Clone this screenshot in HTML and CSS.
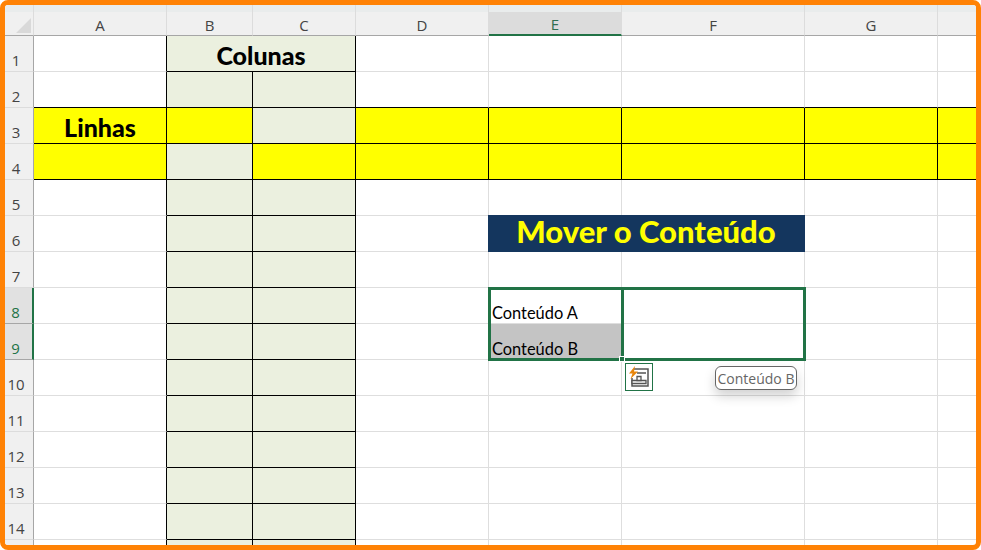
FILE: index.html
```html
<!DOCTYPE html>
<html lang="pt">
<head>
<meta charset="utf-8">
<title>Mover o Conteúdo</title>
<link rel="stylesheet" href="styles.css">
</head>
<body>
<div class="frame">
<div class="sheet">
  <div class="ch corner"><svg class="tri" width="15" height="15" viewBox="0 0 15 15"><path d="M15 0V15H0Z" fill="#d9d9d9"/></svg></div>
  <div class="ch">A</div><div class="ch">B</div><div class="ch">C</div><div class="ch">D</div><div class="ch active">E</div><div class="ch">F</div><div class="ch">G</div><div class="ch last"></div>

  <div class="rh">1</div><div class="c br"></div><div class="c g bk span2 big">Colunas</div><div class="c"></div><div class="c"></div><div class="c"></div><div class="c"></div><div class="c"></div>
  <div class="rh">2</div><div class="c br bbk"></div><div class="c g bk"></div><div class="c g bk"></div><div class="c bbk"></div><div class="c bbk"></div><div class="c bbk"></div><div class="c bbk"></div><div class="c bbk"></div>
  <div class="rh">3</div><div class="c y bk big">Linhas</div><div class="c y bk"></div><div class="c g bk"></div><div class="c y bk"></div><div class="c y bk"></div><div class="c y bk"></div><div class="c y bk"></div><div class="c y bk"></div>
  <div class="rh">4</div><div class="c y bk"></div><div class="c g bk"></div><div class="c y bk"></div><div class="c y bk"></div><div class="c y bk"></div><div class="c y bk"></div><div class="c y bk"></div><div class="c y bk"></div>
  <div class="rh">5</div><div class="c br"></div><div class="c g bk"></div><div class="c g bk"></div><div class="c"></div><div class="c"></div><div class="c"></div><div class="c"></div><div class="c"></div>
  <div class="rh">6</div><div class="c br"></div><div class="c g bk"></div><div class="c g bk"></div><div class="c"></div><div class="c title">Mover o Conteúdo</div><div class="c"></div><div class="c"></div>
  <div class="rh">7</div><div class="c br"></div><div class="c g bk"></div><div class="c g bk"></div><div class="c"></div><div class="c"></div><div class="c"></div><div class="c"></div><div class="c"></div>
  <div class="rh on">8</div><div class="c br"></div><div class="c g bk"></div><div class="c g bk"></div><div class="c"></div><div class="c txt">Conteúdo A</div><div class="c"></div><div class="c"></div><div class="c"></div>
  <div class="rh on">9</div><div class="c br"></div><div class="c g bk"></div><div class="c g bk"></div><div class="c"></div><div class="c txt grey">Conteúdo B</div><div class="c"></div><div class="c"></div><div class="c"></div>
  <div class="rh">10</div><div class="c br"></div><div class="c g bk"></div><div class="c g bk"></div><div class="c"></div><div class="c"></div><div class="c"></div><div class="c"></div><div class="c"></div>
  <div class="rh">11</div><div class="c br"></div><div class="c g bk"></div><div class="c g bk"></div><div class="c"></div><div class="c"></div><div class="c"></div><div class="c"></div><div class="c"></div>
  <div class="rh">12</div><div class="c br"></div><div class="c g bk"></div><div class="c g bk"></div><div class="c"></div><div class="c"></div><div class="c"></div><div class="c"></div><div class="c"></div>
  <div class="rh">13</div><div class="c br"></div><div class="c g bk"></div><div class="c g bk"></div><div class="c"></div><div class="c"></div><div class="c"></div><div class="c"></div><div class="c"></div>
  <div class="rh">14</div><div class="c br"></div><div class="c g bk"></div><div class="c g bk"></div><div class="c"></div><div class="c"></div><div class="c"></div><div class="c"></div><div class="c"></div>
  <div class="rh"></div><div class="c br"></div><div class="c g bk"></div><div class="c g bk"></div><div class="c"></div><div class="c"></div><div class="c"></div><div class="c"></div><div class="c"></div>

  <div class="selection"><div class="sel-line"></div><div class="handle"></div></div>
  <div class="anchor">
    <div class="qa"><svg width="24" height="24" viewBox="0 0 24 24"><path d="M7 4H21V21H5V13" fill="none" stroke="#555" stroke-width="1.5"/><path d="M10 8H19" stroke="#555" stroke-width="1.5"/><path d="M5 15.500H19V18.500H5Z" fill="#fff" stroke="#555" stroke-width="1.3"/><path d="M10 11.500H14V15.500H10Z" fill="#fff" stroke="#555" stroke-width="1.3"/><path d="M8 1L2 8.500H5.500L3.500 14L11 6.500H7Z" fill="#e8860c"/></svg></div>
    <div class="tip">Conteúdo B</div>
  </div>
</div>
</div>
</body>
</html>
```

FILE: styles.css
```css
* { box-sizing: border-box; }
html, body { margin: 0; padding: 0; }
.frame {
  width: 981px;
  height: 550px;
  border: 5px solid #ff8205;
  border-radius: 8px;
  overflow: hidden;
  background: #fff;
}
.sheet {
  position: relative;
  display: grid;
  grid-template-columns: 29px 133px 86px 103px 133px 133px 183px 133px 39px;
  grid-template-rows: 31px repeat(15, 36px);
  width: 971px;
  height: 540px;
  overflow: hidden;
  font-family: "Open Sans", sans-serif;
}
.ch {
  display: flex;
  align-items: flex-end;
  justify-content: center;
  padding-bottom: 1px;
  font-size: 15px;
  line-height: 18px;
  color: #444;
  background: linear-gradient(#e9ecec 7px, #f0f0f0 7px);
  border-bottom: 1px solid #a6a6a6;
  border-right: 1px solid #dcdcdc;
}
.corner {
  justify-content: flex-end;
  padding: 0 2px 2px 0;
}
.tri { display: block; }
.active {
  color: #2f6f50;
  background: linear-gradient(#e9ecec 7px, #dcdcdc 7px);
  border-bottom: 2px solid #217346;
}
.last { border-right: 0; }
.rh {
  display: flex;
  align-items: flex-end;
  justify-content: center;
  padding: 0 6px 1px 0;
  font-size: 15px;
  line-height: 20px;
  color: #444;
  background: #f0f0f0;
  border-right: 1px solid #a6a6a6;
  border-bottom: 1px solid #dcdcdc;
}
.rh.on {
  color: #217346;
  background: #e1e1e1;
  border-right: 2px solid #217346;
  border-bottom-color: #a6a6a6;
}
.c {
  border-right: 1px solid #dedede;
  border-bottom: 1px solid #dedede;
  min-width: 0;
}
.br { border-right-color: #000; }
.bk { border-color: #000; }
.bbk { border-bottom-color: #000; }
.g { background: #ebf0df; }
.y { background: #ffff00; }
.span2 { grid-column: span 2; }
.big {
  display: flex;
  align-items: center;
  justify-content: center;
  padding-top: 2px;
  font-family: Lato, sans-serif;
  font-size: 25px;
  font-weight: 900;
  color: #000;
}
.title {
  grid-column: span 2;
  display: flex;
  align-items: center;
  justify-content: center;
  margin: -1px 0 0 -1px;
  padding-bottom: 4px;
  background: #14365e;
  border-color: #14365e;
  font-family: Lato, sans-serif;
  font-size: 31px;
  font-weight: 900;
  color: #ffff00;
}
.txt {
  display: flex;
  align-items: flex-end;
  padding-left: 3px;
  font-family: Lato, sans-serif;
  font-size: 16.4px;
  line-height: 21px;
  color: #000;
}
.grey { background: #c4c4c4; }
.selection {
  position: absolute;
  left: 483px;
  top: 282px;
  width: 318px;
  height: 74px;
  border: 3px solid #217346;
}
.sel-line {
  position: absolute;
  left: 130px;
  top: 0;
  bottom: 0;
  width: 3px;
  background: #217346;
}
.handle {
  position: absolute;
  left: 128px;
  bottom: -4px;
  width: 6px;
  height: 6px;
  background: #217346;
  border: 1px solid #fff;
}
.anchor { position: absolute; left: 620px; top: 358px; }
.qa {
  position: absolute;
  left: 0;
  top: 0;
  width: 28px;
  height: 28px;
  display: flex;
  align-items: center;
  justify-content: center;
  background: #fff;
  border: 1px solid #217346;
}
.tip {
  position: absolute;
  left: 90px;
  top: 3px;
  width: 82px;
  height: 24px;
  display: flex;
  align-items: center;
  justify-content: center;
  font-size: 14px;
  white-space: nowrap;
  color: #666;
  background: #fff;
  border: 1px solid #666;
  border-radius: 6px;
  box-shadow: 0 6px 12px rgba(0,0,0,.18);
}
```
